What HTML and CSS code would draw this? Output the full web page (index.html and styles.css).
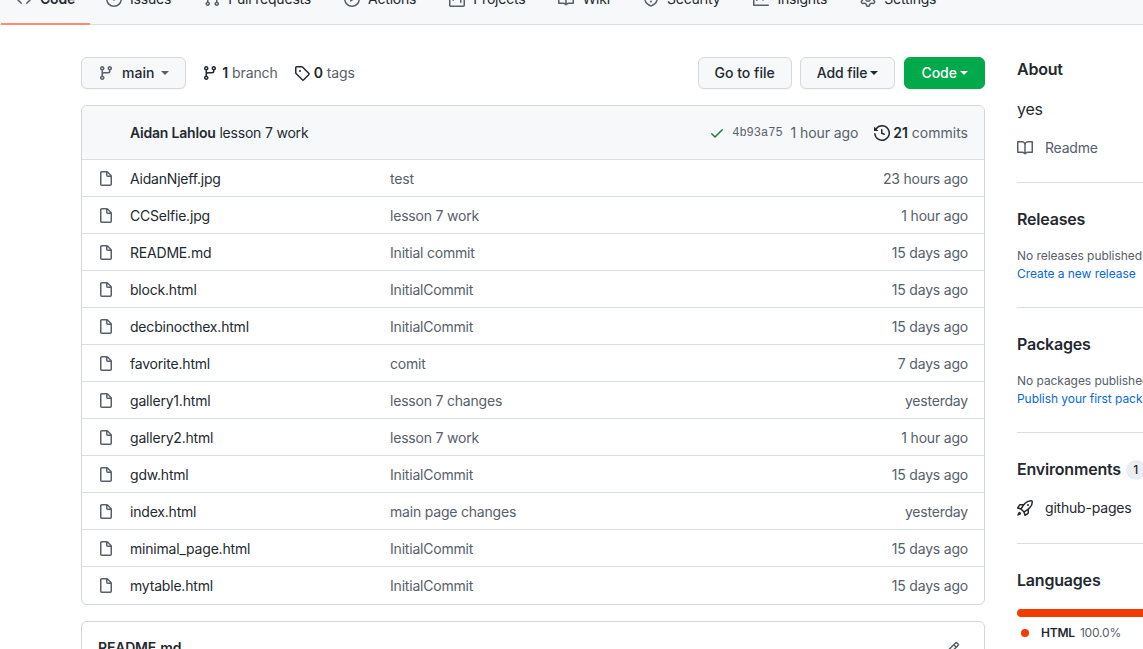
FILE: index.html
```html
<!DOCTYPE html>
<html lang="en">
<head>
<meta charset="utf-8">
<title>Repository</title>
<link rel="stylesheet" href="styles.css">
</head>
<body>
<svg class="sprite" xmlns="http://www.w3.org/2000/svg">
<symbol id="i-code" viewBox="0 0 16 16"><path d="M4.72 3.22a.75.75 0 011.06 1.06L2.06 8l3.72 3.72a.75.75 0 11-1.06 1.06L.47 8.53a.75.75 0 010-1.06l4.25-4.25zm6.56 0a.75.75 0 10-1.06 1.06L13.94 8l-3.72 3.72a.75.75 0 101.06 1.06l4.25-4.25a.75.75 0 000-1.06l-4.25-4.25z"/></symbol>
<symbol id="i-issue" viewBox="0 0 16 16"><path d="M8 9.5a1.5 1.5 0 100-3 1.5 1.5 0 000 3z"/><path fill-rule="evenodd" d="M8 0a8 8 0 100 16A8 8 0 008 0zM1.5 8a6.5 6.5 0 1113 0 6.5 6.5 0 01-13 0z"/></symbol>
<symbol id="i-pr" viewBox="0 0 16 16"><path fill-rule="evenodd" d="M7.177 3.073L9.573.677A.25.25 0 0110 .854v4.792a.25.25 0 01-.427.177L7.177 3.427a.25.25 0 010-.354zM3.75 2.5a.75.75 0 100 1.5.75.75 0 000-1.5zm-2.25.75a2.25 2.25 0 113 2.122v5.256a2.251 2.251 0 11-1.5 0V5.372A2.25 2.25 0 011.5 3.25zM11 2.5h-1V4h1a1 1 0 011 1v5.628a2.251 2.251 0 101.5 0V5A2.5 2.5 0 0011 2.5zm1 10.25a.75.75 0 111.5 0 .75.75 0 01-1.5 0zM3.75 12a.75.75 0 100 1.5.75.75 0 000-1.5z"/></symbol>
<symbol id="i-play" viewBox="0 0 16 16"><path fill-rule="evenodd" d="M1.5 8a6.5 6.5 0 1113 0 6.5 6.5 0 01-13 0zM8 0a8 8 0 100 16A8 8 0 008 0zM6.379 5.227A.25.25 0 006 5.442v5.117a.25.25 0 00.379.214l4.264-2.559a.25.25 0 000-.428L6.379 5.227z"/></symbol>
<symbol id="i-project" viewBox="0 0 16 16"><path fill-rule="evenodd" d="M1.75 0A1.75 1.75 0 000 1.75v12.5C0 15.216.784 16 1.75 16h12.5A1.75 1.75 0 0016 14.25V1.75A1.75 1.75 0 0014.25 0H1.75zM1.5 1.75a.25.25 0 01.25-.25h12.5a.25.25 0 01.25.25v12.5a.25.25 0 01-.25.25H1.75a.25.25 0 01-.25-.25V1.75zM11.75 3a.75.75 0 00-.75.75v7.5a.75.75 0 001.5 0v-7.5a.75.75 0 00-.75-.75zm-8.25.75a.75.75 0 011.5 0v5.5a.75.75 0 01-1.5 0v-5.5zM8 3a.75.75 0 00-.75.75v3.5a.75.75 0 001.5 0v-3.5A.75.75 0 008 3z"/></symbol>
<symbol id="i-book" viewBox="0 0 16 16"><path fill-rule="evenodd" d="M0 1.75A.75.75 0 01.75 1h4.253c1.227 0 2.317.59 3 1.501A3.744 3.744 0 0111.006 1h4.245a.75.75 0 01.75.75v10.5a.75.75 0 01-.75.75h-4.507a2.25 2.25 0 00-1.591.659l-.622.621a.75.75 0 01-1.06 0l-.622-.621A2.25 2.25 0 005.258 13H.75a.75.75 0 01-.75-.75V1.75zm8.755 3a2.25 2.25 0 012.25-2.25H14.5v9h-3.757c-.71 0-1.4.201-1.992.572l.004-7.322zm-1.504 7.324l.004-5.073-.002-2.253A2.25 2.25 0 005.003 2.5H1.5v9h3.757a3.75 3.75 0 011.994.574z"/></symbol>
<symbol id="i-shield" viewBox="0 0 16 16"><path fill-rule="evenodd" d="M7.467.133a1.75 1.75 0 011.066 0l5.25 1.68A1.75 1.75 0 0115 3.48V7c0 1.566-.32 3.182-1.303 4.682-.983 1.498-2.585 2.813-5.032 3.855a1.7 1.7 0 01-1.33 0c-2.447-1.042-4.049-2.357-5.032-3.855C1.32 10.182 1 8.566 1 7V3.48a1.75 1.75 0 011.217-1.667l5.25-1.68zm.61 1.429a.25.25 0 00-.153 0l-5.25 1.68a.25.25 0 00-.174.238V7c0 1.358.275 2.666 1.057 3.86.784 1.194 2.121 2.34 4.366 3.297a.2.2 0 00.154 0c2.245-.956 3.582-2.104 4.366-3.298C13.225 9.666 13.5 8.36 13.5 7V3.48a.25.25 0 00-.174-.237l-5.25-1.68zM9 10.5a1 1 0 11-2 0 1 1 0 012 0zm-.25-5.75a.75.75 0 10-1.5 0v3a.75.75 0 001.5 0v-3z"/></symbol>
<symbol id="i-graph" viewBox="0 0 16 16"><path fill-rule="evenodd" d="M1.5 1.75a.75.75 0 00-1.5 0v12.5c0 .414.336.75.75.75h14.5a.75.75 0 000-1.5H1.5V1.75zm14.28 2.53a.75.75 0 00-1.06-1.06L10 7.94 7.53 5.47a.75.75 0 00-1.06 0L3.22 8.72a.75.75 0 001.06 1.06L7 7.06l2.47 2.47a.75.75 0 001.06 0l5.25-5.25z"/></symbol>
<symbol id="i-gear" viewBox="0 0 16 16"><path fill-rule="evenodd" d="M7.429 1.525a6.593 6.593 0 011.142 0c.036.003.108.036.137.146l.289 1.105c.147.56.55.967.997 1.189.174.086.341.183.501.29.417.278.97.423 1.53.27l1.102-.303c.11-.03.175.016.195.046.219.31.41.641.573.989.014.031.022.11-.059.19l-.815.806c-.411.406-.562.957-.53 1.456a4.588 4.588 0 010 .582c-.032.499.119 1.05.53 1.456l.815.806c.08.08.073.159.059.19a6.494 6.494 0 01-.573.99c-.02.029-.086.074-.195.045l-1.103-.303c-.559-.153-1.112-.008-1.529.27-.16.107-.327.204-.5.29-.449.222-.851.628-.998 1.189l-.289 1.105c-.029.11-.101.143-.137.146a6.613 6.613 0 01-1.142 0c-.036-.003-.108-.037-.137-.146l-.289-1.105c-.147-.56-.55-.967-.997-1.189a4.502 4.502 0 01-.501-.29c-.417-.278-.97-.423-1.53-.27l-1.102.303c-.11.03-.175-.016-.195-.046a6.492 6.492 0 01-.573-.989c-.014-.031-.022-.11.059-.19l.815-.806c.411-.406.562-.957.53-1.456a4.587 4.587 0 010-.582c.032-.499-.119-1.05-.53-1.456l-.815-.806c-.08-.08-.073-.159-.059-.19a6.44 6.44 0 01.573-.99c.02-.029.086-.075.195-.045l1.103.303c.559.153 1.112.008 1.529-.27.16-.107.327-.204.5-.29.449-.222.851-.628.998-1.189l.289-1.105c.029-.11.101-.143.137-.146zM8 0c-.236 0-.47.01-.701.03-.743.065-1.29.615-1.458 1.261l-.29 1.106c-.017.066-.078.158-.211.224a5.994 5.994 0 00-.668.386c-.123.082-.233.09-.3.071L3.27 2.776c-.644-.177-1.392.02-1.82.63a7.977 7.977 0 00-.704 1.217c-.315.675-.111 1.422.363 1.891l.815.806c.05.048.098.147.088.294a6.084 6.084 0 000 .772c.01.147-.038.246-.088.294l-.815.806c-.474.469-.678 1.216-.363 1.891.2.428.436.835.704 1.218.428.609 1.176.806 1.82.63l1.103-.303c.066-.019.176-.011.299.071.213.143.436.272.668.386.133.066.194.158.212.224l.289 1.106c.169.646.715 1.196 1.458 1.26a8.094 8.094 0 001.402 0c.743-.064 1.29-.614 1.458-1.26l.29-1.106c.017-.066.078-.158.211-.224a5.98 5.98 0 00.668-.386c.123-.082.233-.09.3-.071l1.102.302c.644.177 1.392-.02 1.82-.63.268-.382.505-.789.704-1.217.315-.675.111-1.422-.364-1.891l-.814-.806c-.05-.048-.098-.147-.088-.294a6.1 6.1 0 000-.772c-.01-.147.039-.246.088-.294l.814-.806c.475-.469.679-1.216.364-1.891a7.992 7.992 0 00-.704-1.218c-.428-.609-1.176-.806-1.82-.63l-1.103.303c-.066.019-.176.011-.299-.071a5.991 5.991 0 00-.668-.386c-.133-.066-.194-.158-.212-.224L10.16 1.29C9.99.645 9.444.095 8.701.031A8.094 8.094 0 008 0zm1.5 8a1.5 1.5 0 11-3 0 1.5 1.5 0 013 0zM11 8a3 3 0 11-6 0 3 3 0 016 0z"/></symbol>
<symbol id="i-branch" viewBox="0 0 16 16"><path fill-rule="evenodd" d="M11.75 2.5a.75.75 0 100 1.5.75.75 0 000-1.5zm-2.25.75a2.25 2.25 0 113 2.122V6A2.5 2.5 0 0110 8.5H6a1 1 0 00-1 1v1.128a2.251 2.251 0 11-1.5 0V5.372a2.25 2.25 0 111.5 0v1.836A2.492 2.492 0 016 7h4a1 1 0 001-1v-.628A2.25 2.25 0 019.5 3.25zM4.25 12a.75.75 0 100 1.5.75.75 0 000-1.5zM3.5 3.25a.75.75 0 111.5 0 .75.75 0 01-1.5 0z"/></symbol>
<symbol id="i-tag" viewBox="0 0 16 16"><path fill-rule="evenodd" d="M2.5 7.775V2.75a.25.25 0 01.25-.25h5.025a.25.25 0 01.177.073l6.25 6.25a.25.25 0 010 .354l-5.025 5.025a.25.25 0 01-.354 0l-6.25-6.25a.25.25 0 01-.073-.177zm-1.5 0V2.75C1 1.784 1.784 1 2.75 1h5.025c.464 0 .91.184 1.238.513l6.25 6.25a1.75 1.75 0 010 2.474l-5.026 5.026a1.75 1.75 0 01-2.474 0l-6.25-6.25A1.75 1.75 0 011 7.775zM6 5a1 1 0 100 2 1 1 0 000-2z"/></symbol>
<symbol id="i-check" viewBox="0 0 16 16"><path fill-rule="evenodd" d="M13.78 4.22a.75.75 0 010 1.06l-7.25 7.25a.75.75 0 01-1.06 0L2.22 9.28a.75.75 0 011.06-1.06L6 10.94l6.72-6.72a.75.75 0 011.06 0z"/></symbol>
<symbol id="i-history" viewBox="0 0 16 16"><path fill-rule="evenodd" d="M1.643 3.143L.427 1.927A.25.25 0 000 2.104V5.75c0 .138.112.25.25.25h3.646a.25.25 0 00.177-.427L2.715 4.215a6.5 6.5 0 11-1.18 4.458.75.75 0 10-1.493.154 8.001 8.001 0 101.6-5.684zM7.75 4a.75.75 0 01.75.75v2.992l2.028.812a.75.75 0 01-.557 1.392l-2.5-1A.75.75 0 017 8.25v-3.5A.75.75 0 017.75 4z"/></symbol>
<symbol id="i-file" viewBox="0 0 16 16"><path fill-rule="evenodd" d="M3.75 1.5a.25.25 0 00-.25.25v11.5c0 .138.112.25.25.25h8.5a.25.25 0 00.25-.25V6H9.75A1.75 1.75 0 018 4.25V1.5H3.75zm5.75.56v2.19c0 .138.112.25.25.25h2.19L9.5 2.06zM2 1.75C2 .784 2.784 0 3.75 0h5.086c.464 0 .909.184 1.237.513l3.414 3.414c.329.328.513.773.513 1.237v8.086A1.75 1.75 0 0112.25 15h-8.5A1.75 1.75 0 012 13.25V1.75z"/></symbol>
<symbol id="i-rocket" viewBox="0 0 16 16"><path fill-rule="evenodd" d="M14.064 0a8.75 8.75 0 00-6.187 2.563l-.459.458c-.314.314-.616.641-.904.979H3.31a1.75 1.75 0 00-1.49.833L.11 7.607a.75.75 0 00.418 1.11l3.102.954c.037.051.079.1.124.145l2.429 2.428c.046.046.094.088.145.125l.954 3.102a.75.75 0 001.11.418l2.774-1.707a1.75 1.75 0 00.833-1.49V9.485c.338-.288.665-.59.979-.904l.458-.459A8.75 8.75 0 0016 1.936V1.75A1.75 1.75 0 0014.25 0h-.186zM10.5 10.625c-.088.06-.177.118-.266.175l-2.35 1.521.548 1.783 1.949-1.2a.25.25 0 00.119-.213v-2.066zM3.678 8.116L5.2 5.766c.058-.09.117-.178.176-.266H3.309a.25.25 0 00-.213.119l-1.2 1.95 1.782.547zm5.26-4.493A7.25 7.25 0 0114.063 1.5h.186a.25.25 0 01.25.25v.186a7.25 7.25 0 01-2.123 5.127l-.459.458a15.21 15.21 0 01-2.499 2.02l-2.317 1.5-2.143-2.143 1.5-2.317a15.25 15.25 0 012.02-2.5l.458-.458h.002zM12 5a1 1 0 11-2 0 1 1 0 012 0zm-8.44 9.56a1.5 1.5 0 10-2.12-2.12c-.734.73-1.047 2.332-1.15 3.003a.23.23 0 00.265.265c.671-.103 2.273-.416 3.005-1.148z"/></symbol>
<symbol id="i-pencil" viewBox="0 0 16 16"><path fill-rule="evenodd" d="M11.013 1.427a1.75 1.75 0 012.474 0l1.086 1.086a1.75 1.75 0 010 2.474l-8.61 8.61c-.21.21-.47.364-.756.445l-3.251.93a.75.75 0 01-.927-.928l.929-3.25a1.75 1.75 0 01.445-.758l8.61-8.61zm1.414 1.06a.25.25 0 00-.354 0L10.811 3.75l1.439 1.44 1.263-1.263a.25.25 0 000-.354l-1.086-1.086zM11.189 6.25L9.75 4.81l-6.286 6.287a.25.25 0 00-.064.108l-.558 1.953 1.953-.558a.249.249 0 00.108-.064l6.286-6.286z"/></symbol>
</svg>

<div class="page">
<nav class="tabs">
  <a class="tab active"><svg class="ico"><use href="#i-code"/></svg>Code</a>
  <a class="tab"><svg class="ico"><use href="#i-issue"/></svg>Issues</a>
  <a class="tab"><svg class="ico"><use href="#i-pr"/></svg>Pull requests</a>
  <a class="tab"><svg class="ico"><use href="#i-play"/></svg>Actions</a>
  <a class="tab"><svg class="ico"><use href="#i-project"/></svg>Projects</a>
  <a class="tab"><svg class="ico"><use href="#i-book"/></svg>Wiki</a>
  <a class="tab"><svg class="ico"><use href="#i-shield"/></svg>Security</a>
  <a class="tab"><svg class="ico"><use href="#i-graph"/></svg>Insights</a>
  <a class="tab"><svg class="ico"><use href="#i-gear"/></svg>Settings</a>
</nav>

<div class="layout">
  <main class="main">
    <div class="toolbar">
      <button class="btn branch-btn"><svg class="ico"><use href="#i-branch"/></svg><span class="branch-name">main</span><i class="caret"></i></button>
      <a class="stat stat-branch"><svg class="ico dark"><use href="#i-branch"/></svg><b>1</b> branch</a>
      <a class="stat stat-tags"><svg class="ico dark"><use href="#i-tag"/></svg><b>0</b> tags</a>
      <div class="toolbar-right">
        <button class="btn">Go to file</button>
        <button class="btn add">Add file<i class="caret"></i></button>
        <button class="btn primary">Code<i class="caret"></i></button>
      </div>
    </div>

    <section class="files">
      <header class="commit">
        <span class="commit-msg"><b>Aidan Lahlou</b> lesson 7 work</span>
        <span class="commit-meta">
          <svg class="ico check"><use href="#i-check"/></svg>
          <code class="sha">4b93a75</code>
          <span class="commit-time">1 hour ago</span>
          <a class="commits"><svg class="ico dark"><use href="#i-history"/></svg><b>21</b> commits</a>
        </span>
      </header>
      <div class="row"><svg class="ico"><use href="#i-file"/></svg><span class="name">AidanNjeff.jpg</span><span class="msg">test</span><span class="age">23 hours ago</span></div>
      <div class="row"><svg class="ico"><use href="#i-file"/></svg><span class="name">CCSelfie.jpg</span><span class="msg">lesson 7 work</span><span class="age">1 hour ago</span></div>
      <div class="row"><svg class="ico"><use href="#i-file"/></svg><span class="name">README.md</span><span class="msg">Initial commit</span><span class="age">15 days ago</span></div>
      <div class="row"><svg class="ico"><use href="#i-file"/></svg><span class="name">block.html</span><span class="msg">InitialCommit</span><span class="age">15 days ago</span></div>
      <div class="row"><svg class="ico"><use href="#i-file"/></svg><span class="name">decbinocthex.html</span><span class="msg">InitialCommit</span><span class="age">15 days ago</span></div>
      <div class="row"><svg class="ico"><use href="#i-file"/></svg><span class="name">favorite.html</span><span class="msg">comit</span><span class="age">7 days ago</span></div>
      <div class="row"><svg class="ico"><use href="#i-file"/></svg><span class="name">gallery1.html</span><span class="msg">lesson 7 changes</span><span class="age">yesterday</span></div>
      <div class="row"><svg class="ico"><use href="#i-file"/></svg><span class="name">gallery2.html</span><span class="msg">lesson 7 work</span><span class="age">1 hour ago</span></div>
      <div class="row"><svg class="ico"><use href="#i-file"/></svg><span class="name">gdw.html</span><span class="msg">InitialCommit</span><span class="age">15 days ago</span></div>
      <div class="row"><svg class="ico"><use href="#i-file"/></svg><span class="name">index.html</span><span class="msg">main page changes</span><span class="age">yesterday</span></div>
      <div class="row"><svg class="ico"><use href="#i-file"/></svg><span class="name">minimal_page.html</span><span class="msg">InitialCommit</span><span class="age">15 days ago</span></div>
      <div class="row"><svg class="ico"><use href="#i-file"/></svg><span class="name">mytable.html</span><span class="msg">InitialCommit</span><span class="age">15 days ago</span></div>
    </section>

    <section class="readme">
      <span class="readme-title">README.md</span>
      <svg class="ico"><use href="#i-pencil"/></svg>
    </section>
  </main>

  <aside class="side">
    <section class="block about">
      <h2>About</h2>
      <p class="desc">yes</p>
      <a class="side-link"><svg class="ico"><use href="#i-book"/></svg>Readme</a>
    </section>
    <section class="block">
      <h2>Releases</h2>
      <p class="small">No releases published</p>
      <a class="small link">Create a new release</a>
    </section>
    <section class="block">
      <h2>Packages</h2>
      <p class="small">No packages published</p>
      <a class="small link">Publish your first package</a>
    </section>
    <section class="block">
      <h2>Environments <span class="count">1</span></h2>
      <a class="env"><svg class="ico dark"><use href="#i-rocket"/></svg>github-pages</a>
    </section>
    <section class="block last">
      <h2>Languages</h2>
      <div class="bar"></div>
      <div class="lang"><i class="dot"></i><b>HTML</b><span class="pct">100.0%</span></div>
    </section>
  </aside>
</div>
</div>
</body>
</html>
```
FILE: styles.css
```css
* { box-sizing: border-box; }
html, body { margin: 0; padding: 0; background: #fff; }
body {
  font-family: Inter, "Liberation Sans", sans-serif;
  font-size: 14px;
  line-height: 20px;
  letter-spacing: -0.2px;
  color: #24292f;
  overflow: hidden;
}
.sprite { display: none; }
.page { width: 1143px; height: 649px; overflow: hidden; }
.ico { width: 16px; height: 16px; fill: #57606a; flex: none; display: block; }
.ico.dark { fill: #24292f; }

/* tabs */
.tabs {
  height: 25px;
  background: #f6f8fa;
  box-shadow: inset 0 -1px 0 #d8dee4;
  display: flex;
  align-items: flex-end;
  overflow: hidden;
  white-space: nowrap;
}
.tab {
  display: flex;
  flex: none;
  align-items: center;
  gap: 8px;
  height: 50px;
  padding: 0 17px 0 16px;
  border-bottom: 2px solid transparent;
}
.tab.active {
  margin-left: 1px;
  padding: 0 15px 0 15px;
  border-bottom-color: #fd8c73;
  font-weight: 600;
}

/* toolbar */
.layout { display: flex; gap: 32px; padding: 32px 0 0 81px; }
.main { width: 904px; flex: none; }
.toolbar { display: flex; align-items: center; height: 32px; }
.btn {
  display: inline-flex;
  align-items: center;
  height: 32px;
  padding: 0 16px;
  background: #f6f8fa;
  border: 1px solid #d5d9de;
  border-radius: 6px;
  font: 500 14px/20px Inter, "Liberation Sans", sans-serif;
  color: #24292f;
  box-shadow: 0 1px 0 rgba(27, 31, 36, .04);
}
.btn.primary { margin-left: 1px; background: #00a94a; border-color: #00a94a; color: #fff; }
.btn.add { letter-spacing: -0.1px; }
.caret {
  display: inline-block;
  width: 0;
  height: 0;
  margin-left: 3px;
  border: 4px solid transparent;
  border-top-color: currentColor;
  border-bottom-width: 0;
}
.branch-btn .ico { margin-right: 8px; }
.branch-btn .caret { margin-left: 7px; color: #57606a; }
.branch-name { font-weight: 500; }
.stat { display: flex; align-items: center; color: #57606a; white-space: pre; letter-spacing: -0.1px; }
.stat b { color: #24292f; font-weight: 600; }
.stat .ico { margin-right: 4px; }
.stat-branch { margin-left: 16px; }
.stat-tags { margin-left: 16px; }
.toolbar-right { margin-left: auto; display: flex; gap: 8px; }

/* file table */
.files {
  margin-top: 16px;
  border: 1px solid #d0d7de;
  border-radius: 6px;
  overflow: hidden;
}
.commit {
  height: 54px;
  background: #f6f8fa;
  border-bottom: 1px solid #d8dee4;
  display: flex;
  align-items: center;
  justify-content: space-between;
  padding: 0 16px 0 48px;
}
.commit-msg b { font-weight: 600; }
.commit-meta { display: flex; align-items: center; color: #57606a; }
.ico.check { fill: #1a7f37; margin-right: 7px; }
.sha { font: 12px/20px "Liberation Mono", monospace; letter-spacing: 0; margin-right: 8px; }
.commit-time { letter-spacing: -0.1px; }
.commits { display: flex; align-items: center; margin-left: 16px; white-space: pre; letter-spacing: 0; }
.commits b { color: #24292f; font-weight: 600; }
.commits .ico { margin-right: 3px; }
.row {
  display: grid;
  grid-template-columns: 16px 260px 1fr auto;
  column-gap: 16px;
  align-items: center;
  height: 37px;
  padding: 2px 16px 0;
  border-top: 1px solid #d8dee4;
}
.commit + .row { border-top: 0; height: 36px; }
.row:last-child { height: 38px; padding-bottom: 1px; }
.name { color: #24292f; }
.row .msg { margin-left: -16px; color: #57606a; }
.age { color: #57606a; text-align: right; }

/* readme */
.readme {
  margin-top: 16px;
  height: 60px;
  border: 1px solid #d0d7de;
  border-radius: 6px;
  display: flex;
  justify-content: space-between;
  padding: 19px 24px 0 16px;
  font-weight: 600;
}
.readme-title { margin-top: -3px; }

/* sidebar */
.side { width: 220px; flex: none; white-space: nowrap; }
.block { padding: 24px 0 24px; border-bottom: 1px solid #d8dee4; }
.block.about { padding: 0 0 24px; }
.block.last { border: 0; }
.block h2 { margin: 0; font-size: 16px; line-height: 24px; font-weight: 600; }
.desc { margin: 16px 0 0; font-size: 16px; line-height: 24px; }
.side-link { display: flex; align-items: center; gap: 12px; margin-top: 17px; color: #57606a; }
.small { margin: 0; font-size: 12px; line-height: 18px; letter-spacing: -0.05px; color: #57606a; display: block; }
h2 + .small { margin-top: 16px; }
.link { color: #0969da; }
.count {
  display: inline-block;
  width: 20px;
  height: 20px;
  line-height: 20px;
  margin-left: 1px;
  border-radius: 10px;
  background: #eaeef2;
  text-align: center;
  font-size: 12px;
  font-weight: 500;
  vertical-align: 1px;
}
.env { display: flex; align-items: center; gap: 12px; margin: 17px 0 1px; }
.bar { height: 8px; margin-top: 17px; border-radius: 6px; background: #f33c00; }
.lang { display: flex; align-items: center; margin-top: 7px; font-size: 12px; line-height: 18px; color: #57606a; }
.lang b { color: #24292f; font-weight: 600; }
.pct { margin-left: 5px; }
.dot { width: 8px; height: 8px; border-radius: 50%; background: #f33c00; margin: 0 12px 0 4px; }
```
